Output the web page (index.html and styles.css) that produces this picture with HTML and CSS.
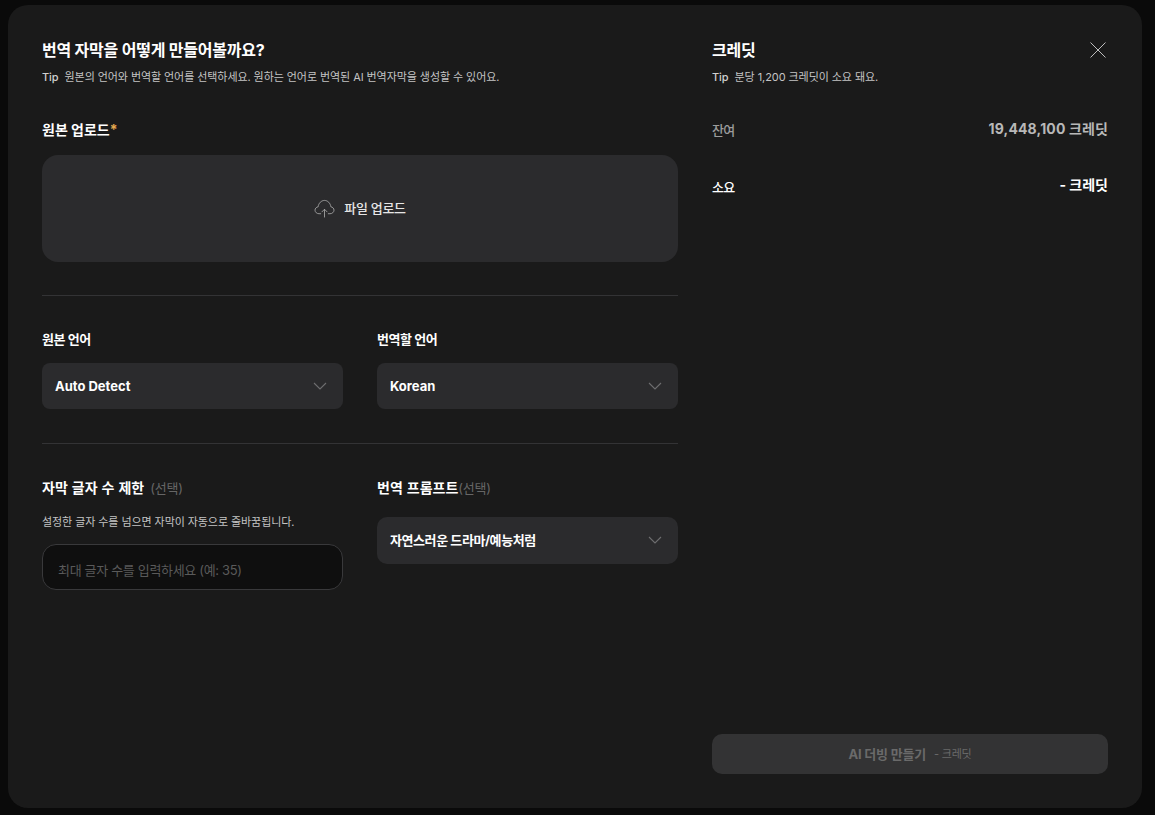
FILE: index.html
```html
<!DOCTYPE html>
<html lang="ko">
<head>
<meta charset="utf-8">
<title>번역 자막</title>
<link rel="stylesheet" href="styles.css">
</head>
<body>
<div class="modal">
  <section class="left">
    <h1 class="title">번역 자막을 어떻게 만들어볼까요?</h1>
    <p class="tip"><b>Tip</b>원본의 언어와 번역할 언어를 선택하세요. 원하는 언어로 번역된 AI 번역자막을 생성할 수 있어요.</p>
    <h2 class="label upload-label">원본 업로드<span class="star">*</span></h2>
    <div class="upload">
      <svg class="cloud" width="21" height="19" viewBox="0 0 22 20" fill="none" stroke="#a8a8a8" stroke-width="0.9" stroke-linecap="round" stroke-linejoin="round"><path d="M7 15.5H5.2C2.9 15.5 1 13.800 1 11.800c0-1.800 1.400-3.300 3.300-3.600C4.800 4.400 7.600 1.500 11 1.500c3.400 0 6.200 2.900 6.700 6.700 1.900.3 3.300 1.800 3.300 3.600 0 2-1.900 3.700-4.200 3.700H15"/><path d="M11 19v-8M8.300 13.500 11 10.800l2.700 2.700"/></svg>
      <span>파일 업로드</span>
    </div>
    <hr class="rule rule-one">
    <div class="cols">
      <div class="col">
        <h3 class="small-label">원본 언어</h3>
        <div class="select"><span>Auto Detect</span><svg class="chev" width="14" height="8" viewBox="0 0 14 8" fill="none" stroke="#6e6e70" stroke-width="1.100"><path d="M1 1l6 6 6-6"/></svg></div>
      </div>
      <div class="col">
        <h3 class="small-label">번역할 언어</h3>
        <div class="select"><span>Korean</span><svg class="chev" width="14" height="8" viewBox="0 0 14 8" fill="none" stroke="#6e6e70" stroke-width="1.100"><path d="M1 1l6 6 6-6"/></svg></div>
      </div>
    </div>
    <hr class="rule rule-two">
    <div class="cols">
      <div class="col">
        <h2 class="label opt-label">자막 글자 수 제한<span class="opt gap">(선택)</span></h2>
        <p class="hint">설정한 글자 수를 넘으면 자막이 자동으로 줄바꿈됩니다.</p>
        <div class="input">최대 글자 수를 입력하세요 (예: 35)</div>
      </div>
      <div class="col">
        <h2 class="label opt-label">번역 프롬프트<span class="opt">(선택)</span></h2>
        <div class="select select-prompt"><span>자연스러운 드라마/예능처럼</span><svg class="chev" width="14" height="8" viewBox="0 0 14 8" fill="none" stroke="#6e6e70" stroke-width="1.100"><path d="M1 1l6 6 6-6"/></svg></div>
      </div>
    </div>
  </section>
  <aside class="right">
    <div class="head">
      <h1 class="title">크레딧</h1>
      <svg class="close" width="16" height="16" viewBox="0 0 16 16" fill="none" stroke="#bdbdbd" stroke-width="1"><path d="M.5.5l15 15M15.500.5l-15 15"/></svg>
    </div>
    <p class="tip"><b>Tip</b>분당 1,200 크레딧이 소요 돼요.</p>
    <div class="row row-rest"><span class="k">잔여</span><span class="v">19,448,100 크레딧</span></div>
    <div class="row row-use"><span class="k">소요</span><span class="v">- 크레딧</span></div>
    <button class="cta" type="button"><b>AI 더빙 만들기</b><span>- 크레딧</span></button>
  </aside>
</div>
</body>
</html>
```

FILE: styles.css
```css
* { box-sizing: border-box; margin: 0; padding: 0; }
html, body { height: 100%; }
body {
  background: #0a0a0a;
  padding: 5px 13px 7px 8px;
  font-family: Inter, Roboto, "Noto Sans CJK KR", sans-serif;
  color: #fff;
  overflow: hidden;
}
.modal {
  height: 803px;
  background: #1a1a1a;
  border-radius: 20px;
  padding: 34px;
  display: flex;
  gap: 34px;
}
.left { width: 636px; flex: none; display: flex; flex-direction: column; }
.right { flex: 1; display: flex; flex-direction: column; }
.title { font-size: 16px; line-height: 22px; font-weight: 700; color: #fff; letter-spacing: -0.22px; }
.tip { margin-top: 8px; font-size: 11px; line-height: 16px; color: #c4c4c4; letter-spacing: -0.07px; }
.tip b { font-weight: 500; margin-right: 6px; color: #d0d0d0; }
.label { font-size: 14px; line-height: 20px; font-weight: 700; color: #fff; }
.upload-label { margin-top: 35px; }
.star { color: #e5a84f; }
.upload {
  margin-top: 15px;
  height: 107px;
  padding-bottom: 2px;
  background: #2b2b2d;
  border-radius: 16px;
  display: flex;
  align-items: center;
  justify-content: center;
  gap: 9px;
  font-size: 13px;
  font-weight: 500;
  letter-spacing: -0.3px;
  color: #e6e6e6;
}
.cloud { flex: none; margin-top: 1px; }
.rule { border: 0; border-top: 1px solid #333335; }
.rule-one { margin: 33px 0 33px; }
.rule-two { margin: 34px 0 34px; }
.cols { display: grid; grid-template-columns: 301px 301px; gap: 34px; }
.small-label { font-size: 13px; line-height: 20px; font-weight: 700; color: #fff; letter-spacing: -0.45px; }
.select {
  margin-top: 14px;
  height: 46px;
  background: #2b2b2d;
  border-radius: 8px;
  padding: 0 16px 0 13px;
  display: flex;
  align-items: center;
  justify-content: space-between;
  font-size: 13px;
  font-weight: 700;
  color: #fff;
}
.select-prompt { margin-top: 19px; border-radius: 10px; height: 47px; padding-bottom: 2px; letter-spacing: -0.42px; }
.opt-label { display: flex; align-items: baseline; word-spacing: 0.7px; }
.opt { font-size: 13px; font-weight: 400; color: #666; letter-spacing: -0.2px; }
.opt.gap { margin-left: 6px; }
.hint { margin-top: 16px; font-size: 11px; line-height: 16px; color: #c4c4c4; letter-spacing: -0.07px; }
.input {
  margin-top: 14px;
  height: 46px;
  background: #0f0f0f;
  border: 1px solid #39393b;
  border-radius: 14px;
  padding: 5px 15px 0;
  display: flex;
  align-items: center;
  font-size: 13px;
  letter-spacing: -0.33px;
  color: #5a5a5a;
}
.head { display: flex; justify-content: space-between; align-items: center; padding-right: 2px; }
.row { display: flex; justify-content: space-between; align-items: flex-start; line-height: 20px; }
.row-rest { margin-top: 34px; color: #9c9c9c; }
.row-use { margin-top: 35px; color: #fff; }
.k { font-size: 13px; font-weight: 500; letter-spacing: -0.6px; padding-top: 1px; }
.row-use .k { padding-top: 2px; }
.v { font-size: 14px; font-weight: 700; }
.row-rest .v { color: #b8b8b8; letter-spacing: 0.14px; }
.cta {
  margin-top: auto;
  height: 40px;
  padding-bottom: 2px;
  border: 0;
  border-radius: 10px;
  background: #333334;
  color: #6a6a6a;
  font: inherit;
  font-size: 13px;
  letter-spacing: -0.2px;
  display: flex;
  align-items: center;
  justify-content: center;
  gap: 8px;
}
.cta b { font-weight: 700; }
.cta span { font-size: 11px; }
```
